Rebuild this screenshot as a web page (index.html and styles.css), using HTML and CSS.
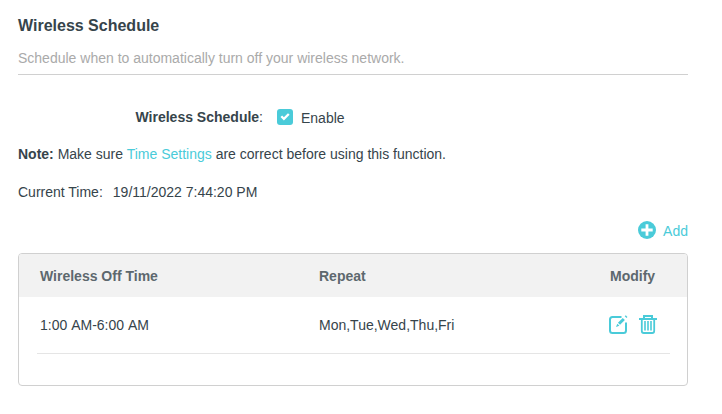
FILE: index.html
```html
<!DOCTYPE html>
<html lang="en">
<head>
<meta charset="utf-8">
<title>Wireless Schedule</title>
<link rel="stylesheet" href="styles.css">
</head>
<body>
<main class="panel">
  <header class="head">
    <h1>Wireless Schedule</h1>
    <p>Schedule when to automatically turn off your wireless network.</p>
  </header>
  <div class="field">
    <div class="label"><b>Wireless Schedule</b>:</div>
    <label class="check">
      <svg class="box" viewBox="0 0 16 16"><rect width="16" height="16" rx="3" fill="#4acbd9"/><path d="M4.300 7.300 6.900 9.900 11.800 5" fill="none" stroke="#fff" stroke-width="2.300"/></svg>
      <span>Enable</span>
    </label>
  </div>
  <p class="note"><b>Note:</b> Make sure <a>Time Settings</a> are correct before using this function.</p>
  <p class="time"><span>Current Time:</span><span>19/11/2022 7:44:20 PM</span></p>
  <div class="add">
    <svg class="plus" viewBox="0 0 18 18"><circle cx="9" cy="9" r="9" fill="#4acbd9"/><path d="M9 3.300v11.400M3.300 9h11.400" stroke="#fff" stroke-width="2.800"/></svg>
    <span>Add</span>
  </div>
  <section class="table">
    <div class="row thead"><span>Wireless Off Time</span><span>Repeat</span><span>Modify</span></div>
    <div class="row item"><span class="period">1:00 AM-6:00 AM</span><span>Mon,Tue,Wed,Thu,Fri</span>
      <span class="actions">
        <svg class="edit" viewBox="0 0 19 19"><g fill="none" stroke="#4acbd9"><path d="M12.500 2H3.500Q1 2 1 4.500v11Q1 18 3.500 18h11q2.500 0 2.500-2.500V7.500" stroke-width="2"/><path d="M10 8.800 14.800 4" stroke-width="3"/><path d="M16.600 2.200 17.600 1.200" stroke-width="2.400"/></g><path d="M8.300 8.700 10.400 10.800 7 11.900Z" fill="#4acbd9"/></svg>
        <svg class="trash" viewBox="0 0 18 19"><g fill="none" stroke="#4acbd9"><path d="M0 4h18M5 4V1h8v3" stroke-width="2"/><path d="M2.800 5v11q0 2 2 2h8.400q2 0 2-2V5" stroke-width="1.800"/><path d="M6 6v9.500M9 6v9.500M12 6v9.500" stroke-width="1.600"/></g></svg>
      </span>
    </div>
  </section>
</main>
</body>
</html>
```
FILE: styles.css
```css
* { box-sizing: border-box; }
body { margin: 0; background: #fff; color: #36444b; font: 14px/20px "Liberation Sans", Arial, sans-serif; }
h1, p { margin: 0; }
.panel { width: 688px; padding: 16px 0 0 18px; }
.head { height: 59px; border-bottom: 1px solid #d0d0d0; }
h1 { font-size: 16px; line-height: 20px; }
.head p { margin-top: 12px; color: #aaa; }
.field { display: flex; margin-top: 32px; height: 20px; }
.label { width: 245px; text-align: right; }
.check { display: flex; margin-left: 14px; gap: 8px; }
.check span { padding-top: 1px; }
.box { width: 16px; height: 16px; margin-top: 2px; }
.note { margin-top: 17px; }
.note a { color: #4acbd9; }
.time { display: flex; gap: 10px; margin-top: 18px; }
.add { display: flex; justify-content: flex-end; align-items: center; gap: 7px; margin-top: 18px; height: 22px; color: #4acbd9; }
.plus { width: 18px; height: 18px; margin-bottom: 2px; }
.table { margin-top: 11px; height: 133px; border: 1px solid #d0d0d0; border-radius: 4px; overflow: hidden; }
.row { display: grid; grid-template-columns: 279px 291px 1fr; align-items: center; }
.thead { height: 43px; padding-left: 21px; background: #f2f2f2; color: #5d686e; font-weight: bold; }
.item { height: 57px; margin: 0 17px 0 18px; padding-left: 3px; border-bottom: 1px solid #e5e5e5; }
.period { font-kerning: none; }
.actions { display: flex; gap: 11px; margin-left: -1px; padding-bottom: 1px; }
.edit { width: 19px; height: 19px; }
.trash { width: 18px; height: 19px; }
```
